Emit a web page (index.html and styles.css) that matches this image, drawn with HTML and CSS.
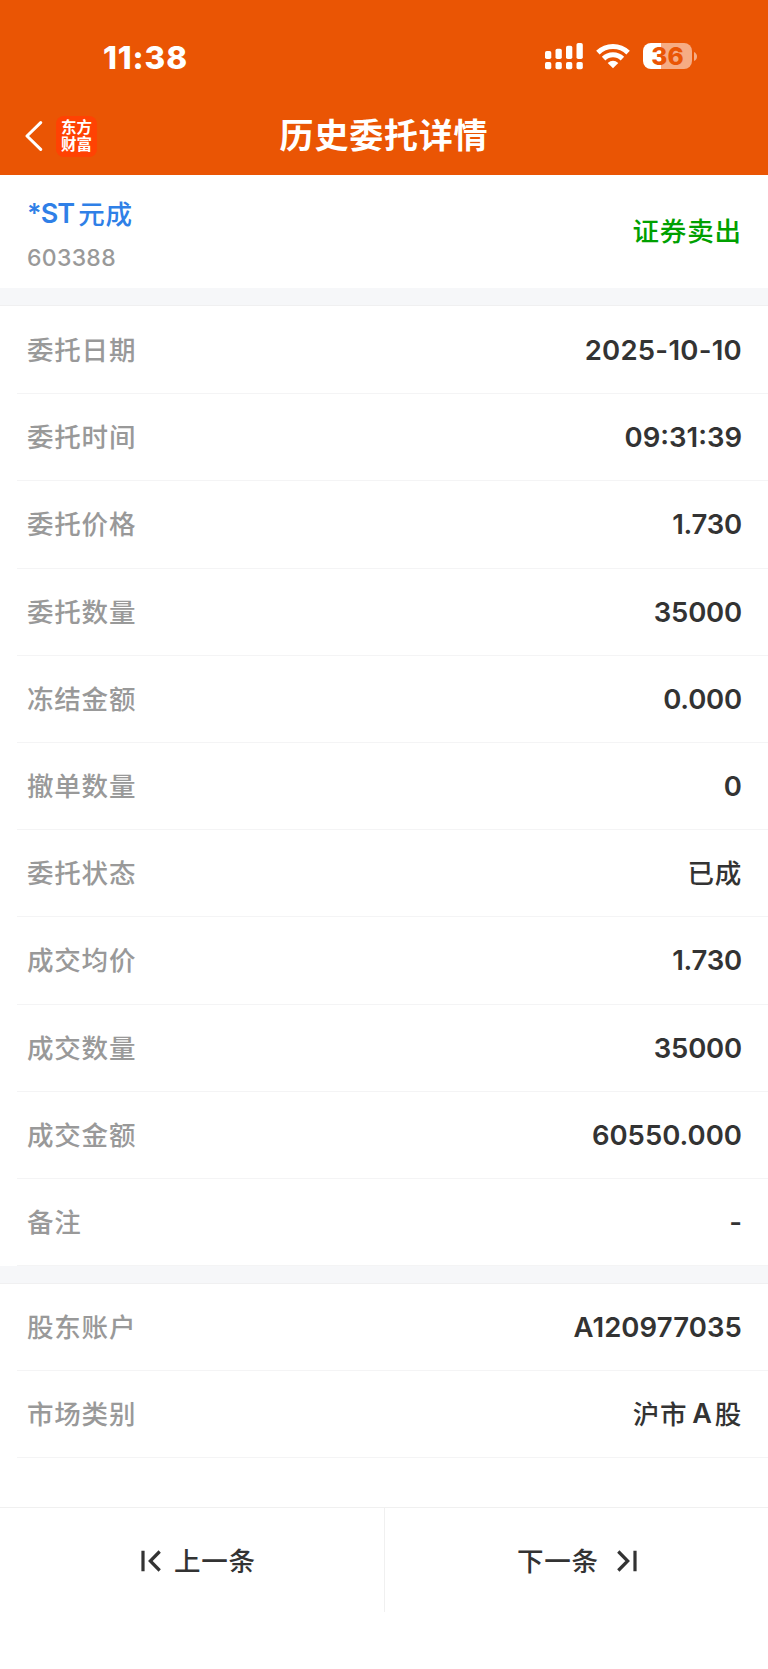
FILE: index.html
```
<!DOCTYPE html>
<html lang="zh-CN">
<head>
<meta charset="utf-8">
<title>历史委托详情</title>
<link rel="stylesheet" href="styles.css">
</head>
<body>
<header class="header">
  <div class="status">
    <span class="clock">11:38</span>
    <div class="status-icons">
      <svg class="signal" width="38" height="28" viewBox="0 0 38 28" fill="#fff">
        <rect x="0" y="9" width="6.3" height="8" rx="1.8"/><rect x="10.5" y="6.7" width="6.3" height="10.3" rx="1.8"/><rect x="21" y="3.7" width="6.3" height="13.3" rx="1.8"/><rect x="31.5" y="1" width="6.3" height="16" rx="1.8"/>
        <rect x="0" y="20" width="6.3" height="7.3" rx="1.8"/><rect x="10.5" y="20" width="6.3" height="7.3" rx="1.8"/><rect x="21" y="20" width="6.3" height="7.3" rx="1.8"/><rect x="31.5" y="20" width="6.3" height="7.3" rx="1.8"/>
      </svg>
      <svg class="wifi" width="34" height="26" viewBox="0 0 34 26">
        <g fill="none" stroke="#fff" stroke-width="5"><path d="M1.9 9.6A21.6 21.6 0 0 1 32.1 9.6"/><path d="M7.6 15.6A13.4 13.4 0 0 1 26.4 15.6"/></g>
        <path fill="#fff" d="M17 25.2 11.7 19.9Q17 15.5 22.3 19.9Z"/>
      </svg>
      <div class="battery"><span class="battery-level">36</span></div>
      <svg class="battery-cap" width="3" height="9" viewBox="0 0 3 9"><path fill="#f6ac84" d="M0 0Q3 1.5 3 4.5T0 9Z"/></svg>
    </div>
  </div>
  <nav class="nav">
    <div class="nav-left">
      <svg width="18" height="32" viewBox="0 0 18 32" fill="none" stroke="#fff" stroke-width="3" stroke-linecap="round" stroke-linejoin="round"><path d="M15.7 2.6 2 16 15.7 29.4"/></svg>
      <div class="brand"><span>东方</span><span>财富</span></div>
    </div>
    <h1 class="title">历史委托详情</h1>
  </nav>
</header>
<section class="stock">
  <div class="stock-id">
    <div class="stock-name"><span class="latin">*ST</span><span>元成</span></div>
    <div class="stock-code">603388</div>
  </div>
  <div class="side">证券卖出</div>
</section>
<div class="gap"></div>
<section class="group first">
  <div class="row"><span class="label">委托日期</span><span class="num date">2025-10-10</span></div>
  <div class="row"><span class="label">委托时间</span><span class="num">09:31:39</span></div>
  <div class="row"><span class="label">委托价格</span><span class="num amount">1.730</span></div>
  <div class="row"><span class="label">委托数量</span><span class="num amount">35000</span></div>
  <div class="row"><span class="label">冻结金额</span><span class="num amount">0.000</span></div>
  <div class="row"><span class="label">撤单数量</span><span class="num">0</span></div>
  <div class="row"><span class="label">委托状态</span><span class="text">已成</span></div>
  <div class="row"><span class="label">成交均价</span><span class="num amount">1.730</span></div>
  <div class="row"><span class="label">成交数量</span><span class="num amount">35000</span></div>
  <div class="row"><span class="label">成交金额</span><span class="num">60550.000</span></div>
  <div class="row"><span class="label">备注</span><span class="num">-</span></div>
</section>
<div class="gap"></div>
<section class="group">
  <div class="row"><span class="label">股东账户</span><span class="num account">A120977035</span></div>
  <div class="row"><span class="label">市场类别</span><span class="text mixed"><span>沪市</span><span class="letter">A</span><span>股</span></span></div>
</section>
<footer class="pager">
  <div class="page prev">
    <svg width="20" height="22" viewBox="0 0 20 22" fill="none" stroke="#333" stroke-width="3.2"><path d="M2 .8V21.2M18.7 1.5 9.3 11 18.7 20.5"/></svg>
    <span>上一条</span>
  </div>
  <div class="page next">
    <span>下一条</span>
    <svg width="20" height="22" viewBox="0 0 20 22" fill="none" stroke="#333" stroke-width="3.2"><path d="M18 .8V21.2M1.3 1.5 10.7 11 1.3 20.5"/></svg>
  </div>
</footer>
</body>
</html>
```
FILE: styles.css
```
* { box-sizing: border-box; }
body {
  margin: 0;
  width: 768px;
  height: 1669px;
  overflow: hidden;
  display: flex;
  flex-direction: column;
  background: #fff;
  color: #333;
  font-family: Inter, "Noto Sans CJK SC", sans-serif;
}
svg { display: block; flex: none; }
.header { height: 175px; background: #ea5504; color: #fff; flex: none; }
.status {
  height: 97px;
  padding: 42px 71px 0 103px;
  display: flex;
  justify-content: space-between;
  align-items: flex-start;
}
.clock { font-size: 31.5px; line-height: 31px; font-weight: 800; letter-spacing: 0.9px; }
.status-icons { display: flex; align-items: center; height: 28px; }
.wifi { margin-left: 13px; }
.battery {
  margin-left: 13px;
  width: 49px;
  height: 26px;
  border-radius: 8px;
  background: linear-gradient(90deg, #fff 0 18px, #f6ac84 18px);
  color: #ea5504;
  text-align: center;
  font-size: 24.5px;
  line-height: 27px;
  font-weight: 800;
}
.battery-cap { margin-left: 2px; }
.nav { display: grid; grid-template-columns: 1fr auto 1fr; align-items: center; height: 78px; }
.nav-left { display: flex; align-items: center; gap: 13px; padding-left: 25px; }
.brand {
  width: 41px;
  height: 41px;
  border-radius: 8px;
  background: #ff4203;
  display: flex;
  flex-direction: column;
  align-items: center;
  justify-content: center;
  font-size: 15.5px;
  line-height: 17px;
  font-weight: 700;
}
.title { margin: 0; font-size: 34px; line-height: 40px; font-weight: 700; letter-spacing: 0.8px; }
.stock {
  height: 113px;
  flex: none;
  padding: 0 26px 0 27px;
  display: flex;
  justify-content: space-between;
}
.stock-name {
  margin-top: 20px;
  display: flex;
  gap: 4px;
  color: #2f80e7;
  font-size: 26.5px;
  line-height: 38px;
  font-weight: 500;
  letter-spacing: 0.7px;
}
.latin { font-size: 27px; letter-spacing: -0.9px; font-weight: 600; }
.stock-code { color: #999; font-size: 23px; line-height: 28px; margin-top: 11px; letter-spacing: 0.3px; font-weight: 500; }
.side { color: #00a000; font-size: 26.5px; line-height: 38px; margin-top: 37px; font-weight: 500; letter-spacing: 0.9px; }
.gap { height: 18px; flex: none; background: #f6f7f9; border-bottom: 1px solid #f0f0f1; }
.group { flex: none; }
.first { padding-top: 1px; }
.row {
  height: 87.2px;
  margin-left: 17px;
  padding: 0 26px 0 10px;
  border-bottom: 1px solid #f4f4f5;
  display: flex;
  justify-content: space-between;
  align-items: center;
}
.label { color: #999; font-size: 26.5px; line-height: 38px; letter-spacing: 0.8px; font-weight: 500; }
.num { font-size: 27.5px; line-height: 38px; font-weight: 600; }
.date { letter-spacing: 0.25px; }
.amount { letter-spacing: -0.2px; }
.account { letter-spacing: 0.1px; }
.text { font-size: 26.5px; line-height: 38px; letter-spacing: 0.8px; font-weight: 500; }
.mixed { display: flex; }
.letter { margin: 0 2px 0 5px; font-size: 27px; font-weight: 600; }
.pager {
  margin-top: auto;
  height: 162px;
  flex: none;
  border-top: 1px solid #f0f0f0;
  display: grid;
  grid-template-columns: 1fr 1fr;
}
.page {
  display: flex;
  align-items: center;
  height: 104px;
  padding-top: 2px;
  font-size: 26.5px;
  line-height: 38px;
  font-weight: 500;
  letter-spacing: 0.8px;
}
.prev { padding-left: 141px; gap: 13px; }
.next { padding-left: 132px; gap: 18px; border-left: 1px solid #f0f0f0; }
```
